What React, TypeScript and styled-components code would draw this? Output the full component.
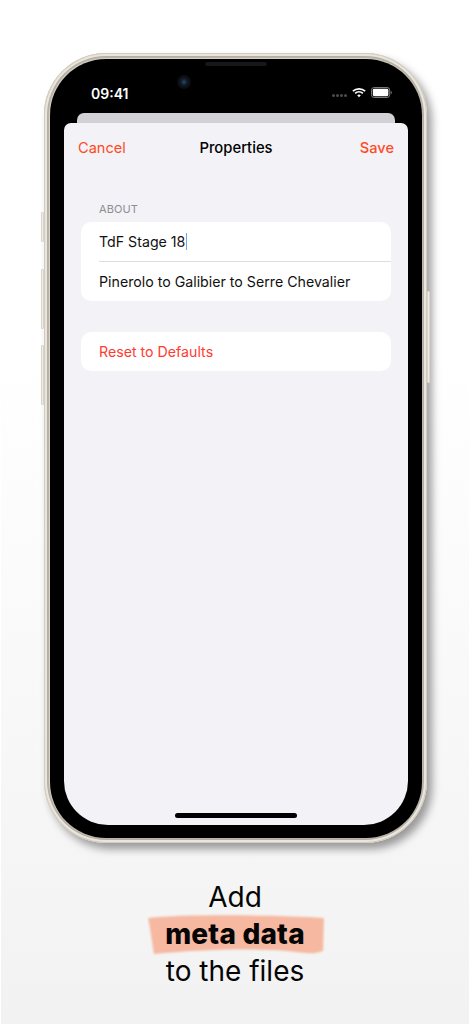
import React from "react";
import styled, { createGlobalStyle } from "styled-components";

const Global = createGlobalStyle`
  html, body { margin: 0; padding: 0; }
  body { font-family: Inter, "Liberation Sans", sans-serif; background: #fff; }
`;

const Page = styled.div`
  width: 472px;
  height: 1024px;
  overflow: hidden;
  box-sizing: border-box;
  padding: 53px 45px 0 44px;
  background:
    linear-gradient(90deg, #fff 1px, transparent 1px, transparent 469.5px, #fff 469.5px),
    linear-gradient(180deg, #ffffff 0%, #ffffff 35%, #f2f2f2 100%);
  display: flex;
  flex-direction: column;
  align-items: stretch;
`;

const Phone = styled.div`
  position: relative;
  height: 790px;
  box-sizing: border-box;
  padding: 6px 5px 5px 6px;
  border-radius: 62px;
  background: #dcd6ca;
  box-shadow:
    inset 0 0 0 1px #d2ccc0,
    inset 0 0 0 3px #ebe6dd,
    inset 0 0 1px 5px #b5b0a6,
    5px 6px 9px rgba(0, 0, 0, 0.38);
`;

const SideButton = styled.div<{ $side: "left" | "right"; $top: number; $height: number }>`
  position: absolute;
  top: ${(p) => p.$top}px;
  ${(p) => (p.$side === "left" ? "left: -3px;" : "right: -3px;")}
  width: 3px;
  height: ${(p) => p.$height}px;
  background: #f0ece5;
  border: 1px solid #d9d4ca;
  box-sizing: border-box;
  border-radius: 1px;
`;

const Bezel = styled.div`
  position: relative;
  height: 100%;
  box-sizing: border-box;
  padding: 0 14px 13px 14px;
  border-radius: 56px;
  background: #000;
  display: flex;
  flex-direction: column;
`;

const Speaker = styled.div`
  position: absolute;
  top: 3px;
  left: 155px;
  width: 62px;
  height: 4px;
  border-radius: 3px;
  background: #15171a;
`;

const Camera = styled.div`
  position: absolute;
  top: 16px;
  left: 127px;
  width: 14px;
  height: 14px;
  border-radius: 50%;
  background: radial-gradient(circle at 50% 50%, #27506a 0, #17263a 22%, #0e0f13 50%, #08090b 100%);
`;

const StatusBar = styled.div`
  height: 54px;
  flex: none;
  box-sizing: border-box;
  padding: 26px 16px 0 27px;
  display: flex;
  justify-content: space-between;
  align-items: flex-start;
  color: #fff;
`;

const Time = styled.span`
  font-size: 14px;
  line-height: 17px;
  font-weight: 600;
`;

const StatusIcons = styled.div`
  display: flex;
  align-items: center;
  gap: 5px;
  padding-top: 2px;
`;

const SignalDots = styled.div`
  display: flex;
  gap: 1px;
  margin-top: 6px;
`;

const Dot = styled.span`
  width: 3px;
  height: 3px;
  border-radius: 50%;
  background: #4b4b4b;
`;

const BackSheet = styled.div`
  flex: none;
  height: 10px;
  margin: 0 13px;
  background: #d1d1d6;
  border-radius: 7px 7px 0 0;
`;

const Sheet = styled.div`
  flex: 1;
  position: relative;
  background: #f2f2f7;
  border-radius: 7px 7px 44px 44px;
  display: flex;
  flex-direction: column;
`;

const NavBar = styled.div`
  height: 50px;
  flex: none;
  box-sizing: border-box;
  padding: 0 14px 0 14px;
  display: grid;
  grid-template-columns: 1fr auto 1fr;
  align-items: center;
`;

const NavAction = styled.span<{ $end?: boolean }>`
  font-size: 14.6px;
  line-height: 50px;
  color: #ff4b1f;
  font-weight: ${(p) => (p.$end ? 500 : 400)};
  text-align: ${(p) => (p.$end ? "right" : "left")};
`;

const NavTitle = styled.span`
  font-size: 14.8px;
  font-weight: 500;
  color: #000;
`;

const Content = styled.div`
  padding: 29px 17px 0 17px;
  display: flex;
  flex-direction: column;
`;

const SectionLabel = styled.div`
  font-size: 11px;
  line-height: 14px;
  color: #8e8e93;
  padding-left: 18px;
  margin-bottom: 6px;
  letter-spacing: 0.1px;
`;

const Group = styled.div`
  background: #fff;
  border-radius: 10px;
  margin-bottom: 31px;
`;

const Row = styled.div<{ $danger?: boolean; $divided?: boolean }>`
  height: ${(p) => (p.$divided ? 40 : 39)}px;
  box-sizing: border-box;
  margin-left: 18px;
  display: flex;
  align-items: center;
  font-size: 14.2px;
  color: ${(p) => (p.$danger ? "#ff3b30" : "#111")};
  border-bottom: ${(p) => (p.$divided ? "1px solid #dedee2" : "0")};
`;

const Caret = styled.span`
  display: inline-block;
  width: 1.5px;
  height: 17px;
  margin-left: 0.5px;
  background: #6aa5ee;
`;

const HomeIndicator = styled.div`
  position: absolute;
  left: 111px;
  bottom: 7px;
  width: 122px;
  height: 5px;
  border-radius: 3px;
  background: #000;
`;

const Caption = styled.div`
  margin-top: 36px;
  margin-right: 1px;
  display: flex;
  flex-direction: column;
  align-items: center;
  color: #050505;
  font-size: 28px;
  line-height: 37px;
`;

const HighlightLine = styled.div`
  position: relative;
  font-weight: 800;
  letter-spacing: 0.2px;
`;

const Brush = styled.svg`
  position: absolute;
  left: -18px;
  top: -4px;
  width: 178px;
  height: 44px;
  z-index: 0;
`;

const HighlightText = styled.span`
  position: relative;
  z-index: 1;
`;

const Wifi = () => (
  <svg width="14" height="11" viewBox="0 0 16 12" fill="none">
    <path d="M1 4.400C4.900 .9 11.100 .9 15 4.400" stroke="#fff" strokeWidth="2" />
    <path d="M3.600 6.900c2.500-2.200 6.300-2.200 8.800 0" stroke="#fff" strokeWidth="2" />
    <path d="M8 11.400 5.900 9.100c1.200-1 3-1 4.200 0z" fill="#fff" />
  </svg>
);

const Battery = () => (
  <svg width="21" height="11" viewBox="0 0 23 12" fill="none">
    <rect x="0.5" y="0.5" width="20" height="11" rx="3" stroke="#8a8a8a" />
    <rect x="2" y="2" width="17" height="8" rx="1.6" fill="#fff" />
    <path d="M21.600 4v4c.8-.3 1.200-1 1.200-2s-.4-1.700-1.200-2z" fill="#777" />
  </svg>
);

export default function App() {
  return (
    <Page>
      <Global />
      <Phone>
        <SideButton $side="left" $top={159} $height={30} />
        <SideButton $side="left" $top={216} $height={60} />
        <SideButton $side="left" $top={292} $height={60} />
        <SideButton $side="right" $top={238} $height={92} />
        <Bezel>
          <Speaker />
          <Camera />
          <StatusBar>
            <Time>09:41</Time>
            <StatusIcons>
              <SignalDots>
                <Dot />
                <Dot />
                <Dot />
                <Dot />
              </SignalDots>
              <Wifi />
              <Battery />
            </StatusIcons>
          </StatusBar>
          <BackSheet />
          <Sheet>
            <NavBar>
              <NavAction>Cancel</NavAction>
              <NavTitle>Properties</NavTitle>
              <NavAction $end>Save</NavAction>
            </NavBar>
            <Content>
              <SectionLabel>ABOUT</SectionLabel>
              <Group>
                <Row $divided>
                  TdF Stage 18
                  <Caret />
                </Row>
                <Row>Pinerolo to Galibier to Serre Chevalier</Row>
              </Group>
              <Group>
                <Row $danger>Reset to Defaults</Row>
              </Group>
            </Content>
            <HomeIndicator />
          </Sheet>
        </Bezel>
      </Phone>
      <Caption>
        <div>Add</div>
        <HighlightLine>
          <Brush viewBox="0 0 178 44">
            <defs>
              <filter id="soft" x="-5%" y="-10%" width="110%" height="120%">
                <feGaussianBlur stdDeviation="1.2" />
              </filter>
            </defs>
            <path
              d="M1 6C40 2 130 3 177 6L176 39C165 43 158 41 140 39C100 36 50 38 7 42C5 30 3 15 1 6Z"
              fill="#f6b8a0"
              filter="url(#soft)"
            />
          </Brush>
          <HighlightText>meta data</HighlightText>
        </HighlightLine>
        <div>to the files</div>
      </Caption>
    </Page>
  );
}
